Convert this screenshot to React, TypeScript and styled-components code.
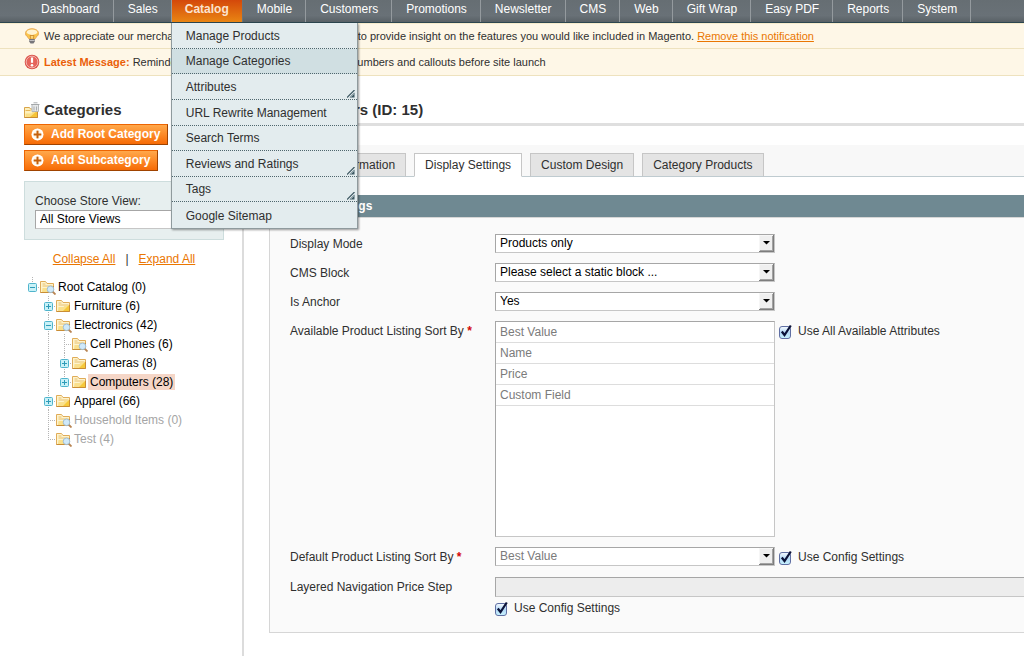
import React from "react";
import styled, { createGlobalStyle, css } from "styled-components";

const GlobalStyle = createGlobalStyle`
  *, *::before, *::after { box-sizing: border-box; }
  body {
    margin: 0;
    background: #fff;
    color: #2f2f2f;
    font: 12px/18px "Liberation Sans", Arial, Helvetica, sans-serif;
    overflow-x: hidden;
  }
  ul { list-style: none; margin: 0; padding: 0; }
  button, input, select { font: inherit; margin: 0; }
`;

const Page = styled.div`
  display: flex;
  flex-direction: column;
  min-height: 100vh;
`;

/* ---------- top navigation ---------- */

const NavBar = styled.nav`
  background: linear-gradient(#666e73 0, #697177 70%, #596166 100%);
  border-bottom: 1px solid #2c4650;
  height: 23px;
`;

const NavList = styled.ul`
  display: flex;
  padding-left: 27px;
`;

const NavItem = styled.li<{ $active?: boolean }>`
  position: relative;
  border-right: 1px solid #949a9e;
  ${(p) =>
    p.$active &&
    css`
      border-right-color: #6b7378;
    `}
`;

const NavLink = styled.a<{ $active?: boolean }>`
  display: block;
  height: 22px;
  padding: 0 13px 0 14px;
  color: #fff;
  text-decoration: none;
  white-space: nowrap;
  ${(p) =>
    p.$active &&
    css`
      padding: 0 13px;
      color: #fbe3cf;
      font-weight: bold;
      background: linear-gradient(#d4480a, #e98513);
    `}
`;

const Menu = styled.ul`
  position: absolute;
  z-index: 5;
  top: 23px;
  left: -1px;
  width: 187px;
  height: 206px;
  display: grid;
  grid-template-rows: repeat(8, 1fr);
  background: #e3ecee;
  border: 1px solid #8f9a9d;
  border-top: 0;
  box-shadow: 1px 1px 2px rgba(0, 0, 0, 0.4);
`;

const MenuItem = styled.li<{ $hover?: boolean }>`
  display: flex;
  justify-content: space-between;
  align-items: flex-end;
  padding-right: 2px;
  background: ${(p) => (p.$hover ? "#d0dfe2" : "transparent")};
  border-bottom: 1px dotted #4f666d;
  &:last-child { border-bottom: 0; }
`;

const MenuLink = styled.a`
  flex: 1;
  padding: 0 14px;
  line-height: 24px;
  color: #2f2f2f;
  text-decoration: none;
`;

/* ---------- notifications ---------- */

const Notice = styled.div<{ $first?: boolean }>`
  display: flex;
  align-items: center;
  gap: 4px;
  height: ${(p) => (p.$first ? 26 : 27)}px;
  padding-left: 24px;
  background: #fef7e7;
  border-bottom: 1px solid #eee2be;
  border-top: ${(p) => (p.$first ? "1px solid #f6ebcb" : "0")};
  font-size: 11px;
  white-space: nowrap;
  svg { flex: none; }
  strong { color: #ea5f0a; }
`;

const OrangeLink = styled.a`
  color: #ea7601;
  text-decoration: underline;
`;

/* ---------- layout ---------- */

const Columns = styled.div`
  flex: 1;
  display: grid;
  grid-template-columns: 244px minmax(0, 1fr);
`;

const Sidebar = styled.aside`
  padding: 24px 18px 24px 24px;
  border-right: 2px solid #dcdcdc;
`;

const Content = styled.main`
  padding: 24px 0 24px 25px;
`;

const Heading = styled.h3`
  display: flex;
  align-items: center;
  gap: 4px;
  margin: 0;
  height: 20px;
  font-size: 15px;
`;

const ActionButton = styled.button`
  display: flex;
  align-items: center;
  gap: 7px;
  height: 21px;
  margin: 0 0 5px;
  padding: 0 7px 1px 6px;
  border: 1px solid;
  border-color: #ed6502 #a04300 #a04300 #ed6502;
  background: linear-gradient(#ffa84b, #fd8a27 50%, #f66b06);
  color: #fff;
  font-weight: bold;
`;

const Actions = styled.div`
  display: flex;
  flex-direction: column;
  align-items: flex-start;
  padding-top: 4px;
`;

const StoreSwitcher = styled.div`
  display: flex;
  flex-direction: column;
  height: 59px;
  margin-top: 5px;
  padding: 10px;
  background: #e7efef;
  border: 1px solid #cddddd;
`;

const TreeActions = styled.div`
  display: flex;
  justify-content: center;
  gap: 10px;
  padding: 10px 0 9px;
`;

/* ---------- category tree ---------- */

const TreeRow = styled.li`
  display: flex;
  align-items: center;
  height: 19px;
  svg { flex: none; }
`;

const TreeLabel = styled.a<{ $selected?: boolean; $muted?: boolean }>`
  padding: 0 2px;
  line-height: 16px;
  text-decoration: none;
  white-space: nowrap;
  color: ${(p) => (p.$muted ? "#a5a5a5" : "#000")};
  background: ${(p) => (p.$selected ? "#f5d6c7" : "transparent")};
`;

/* ---------- tabs ---------- */

const Rule = styled.hr`
  height: 3px;
  margin: 3px 0 19px;
  border: 0;
  background: #dfdfdf;
`;

const TabBar = styled.div`
  display: flex;
  gap: 8px;
  height: 32px;
  padding: 8px 0 0 9px;
  background: #f8f8f8;
  border-bottom: 1px solid #bfcbd0;
`;

const Tab = styled.button<{ $active?: boolean }>`
  height: 24px;
  padding: 0 10px;
  white-space: nowrap;
  color: #2f2f2f;
  background: ${(p) => (p.$active ? "#fff" : "#e4e4e4")};
  border: 1px solid #c6c6c6;
  border-bottom-color: ${(p) => (p.$active ? "#fff" : "#bfcbd0")};
`;

/* ---------- form ---------- */

const SectionTitle = styled.h4`
  margin: 18px 0 0;
  padding: 0 10px;
  font-size: 12px;
  line-height: 22px;
  color: #fff;
  background: #6f8992;
`;

const FieldSet = styled.div`
  display: flex;
  flex-direction: column;
  gap: 10px;
  padding: 16px 0 14px 20px;
  background: #fafafa;
  border: 1px solid #d6d6d6;
  border-right: 0;
`;

const FieldRow = styled.div`
  display: grid;
  grid-template-columns: 205px minmax(0, 1fr);
  align-items: start;
`;

const FieldLabel = styled.label`
  line-height: 20px;
  height: 19px;
  span { color: #d40707; font-weight: bold; }
`;

const Control = styled.div`
  display: flex;
  align-items: flex-start;
  gap: 4px;
`;

const Stack = styled.div`
  display: flex;
  flex-direction: column;
  gap: 1px;
`;

const SelectWrap = styled.div<{ $wide?: boolean }>`
  display: grid;
  width: ${(p) => (p.$wide ? "280px" : "100%")};
  > * { grid-area: 1 / 1; }
  > svg { justify-self: end; align-self: center; margin-right: 1px; pointer-events: none; }
`;

const fieldBorder = css`
  border: 1px solid;
  border-color: #a6a6a6 #c6c6c6 #c6c6c6 #a6a6a6;
  border-radius: 0;
`;

const SelectBox = styled.select`
  ${fieldBorder}
  appearance: none;
  width: 100%;
  height: 19px;
  padding: 0 18px 1px 4px;
  line-height: 16px;
  color: #000;
  background: #fff;
  opacity: 1;
  &:disabled { color: #7b7b7b; }
`;

const ListBox = styled.select`
  ${fieldBorder}
  width: 280px;
  height: 216px;
  padding: 0;
  background: #fff;
  opacity: 1;
  overflow: hidden;
  option {
    min-height: 21px;
    padding: 3px 4px 1px;
    line-height: 17px;
    color: #7b7b7b;
    border-bottom: 1px solid #ddd;
  }
`;

const TextBox = styled.input`
  ${fieldBorder}
  border-right: 0;
  width: 100%;
  height: 20px;
  background: #ededed;
`;

const CheckLabel = styled.label`
  display: flex;
  align-items: center;
  gap: 5px;
  height: 20px;
  white-space: nowrap;
`;

const CheckWrap = styled.span`
  display: grid;
  width: 14px;
  height: 15px;
  > * { grid-area: 1 / 1; }
  svg { pointer-events: none; }
`;

const CheckInput = styled.input`
  appearance: none;
  align-self: end;
  width: 12px;
  height: 13px;
  border: 1px solid #5f6fa3;
  border-radius: 3px;
  background: linear-gradient(#f2f8fe, #b4d9f7 50%, #c5f0fd);
`;

/* ---------- drawings ---------- */

const BulbIcon = () => (
  <svg width="16" height="16" viewBox="0 0 16 16" aria-hidden="true">
    <path d="M8 .8C4.500.8 1.500 2.500 1.500 5.500c0 2.500 2.800 3.500 3.700 5.500h5.600c.9-2 3.700-3 3.700-5.500C14.500 2.500 11.500.8 8 .8z" fill="#fbc64e" stroke="#e6a650" />
    <ellipse cx="8" cy="4.200" rx="5.200" ry="2.700" fill="#fff3d2" />
    <path d="M7 11L6 7.500h4L9 11" fill="#fdd877" stroke="#c9862a" strokeWidth=".8" />
    <path d="M5.200 11h5.600v2.500L9.500 15.500h-3L5.200 13.500z" fill="#77767a" />
    <path d="M5.500 12.500h5" stroke="#c9c8cb" strokeWidth=".9" />
  </svg>
);

const AlertIcon = () => (
  <svg width="16" height="16" viewBox="0 0 16 16" aria-hidden="true">
    <circle cx="8" cy="8" r="7.300" fill="#d94b43" />
    <circle cx="8" cy="8" r="5.900" fill="#e5645b" stroke="#f4b9b3" />
    <path d="M8 3.500v5.300" stroke="#fff" strokeWidth="2.200" />
    <circle cx="8" cy="11.300" r="1.300" fill="#fff" />
  </svg>
);

const CategoriesIcon = () => (
  <svg width="16" height="17" viewBox="0 0 16 17" aria-hidden="true">
    <path d="M.5 15.500V5.500h5l1 1.500h7v8.500z" fill="#fdf0bd" stroke="#d9a54a" />
    <path d="M1.500 8.500h5" stroke="#e6b757" />
    <path d="M1.500 15v-3.500h6L9 9.500h4V15z" fill="#fbdf86" />
    <path d="M6 15l7-6v6z" fill="#f5c438" />
    <path d="M.5 15.500h13V9" fill="none" stroke="#c98d35" />
    <path d="M8 2.500h6.500V9.500H8z" fill="#e6e8e9" stroke="#b3b6b8" />
    <path d="M7 2.500h8.500M9.500.8h4M10 4.500v4M12.500 4.500v4" stroke="#a3a6a8" strokeWidth=".9" />
  </svg>
);

const PlusIcon = () => (
  <svg width="13" height="13" viewBox="0 0 13 13" aria-hidden="true">
    <circle cx="6.500" cy="6.500" r="6" fill="#fff6e4" />
    <path d="M6.500 2.500v8M2.500 6.500h8" stroke="#c5600b" strokeWidth="2" />
    <circle cx="6.500" cy="6.500" r="5" fill="none" stroke="#fff" strokeWidth="1.500" />
  </svg>
);

const SubmenuMark = () => (
  <svg width="8" height="9" viewBox="0 0 8 9" aria-hidden="true">
    <path d="M0 7.500L7.500 0" stroke="#3d5862" strokeWidth="1.200" />
    <path d="M2.500 7.500L7.500 2.500v5z" fill="#3d5862" />
    <path d="M4 7l3-3" stroke="#a9bcc2" strokeWidth=".7" />
  </svg>
);

const ArrowButton = () => (
  <svg width="15" height="17" viewBox="0 0 15 17" aria-hidden="true">
    <path d="M0 0h15v17H0z" fill="#efefef" />
    <path d="M14 0h1v17H0v-1h14z" fill="#7d7d7d" />
    <path d="M13 1h1v15H1v-1h12z" fill="#a3a3a3" />
    <path d="M0 .5h14M.5 0v16" stroke="#f6f6f6" />
    <path d="M4 6h7L7.500 9.500z" fill="#000" />
  </svg>
);

const FolderIcon = ({ search }: { search?: boolean }) => (
  <svg width="16" height="16" viewBox="0 0 16 16" aria-hidden="true">
    <path d="M.5 13.500v-11h5l1.500 2h6.500v9z" fill="#fdf3cd" stroke="#e0ac58" />
    <path d="M2.500 5h3M2.500 7h10" stroke="#e9c06f" />
    <path d="M2 13l.5-4h5l1.200-1.500H13V13z" fill="#fae08c" />
    <path d="M7 13l6-6v6z" fill="#f6c93b" />
    <path d="M.5 13.500h13V7" fill="none" stroke="#c98d35" />
    {search && (
      <>
        <path d="M12.500 12.500l3 3" stroke="#b88452" strokeWidth="1.800" />
        <circle cx="10.500" cy="10.300" r="3.300" fill="#cfe9fa" stroke="#a2bfd2" />
      </>
    )}
  </svg>
);

type Joint = "plus" | "minus" | "none";

const JointCell = ({ joint, below }: { joint: Joint; below: boolean }) => (
  <svg width="16" height="19" viewBox="0 0 16 19" aria-hidden="true">
    <g stroke="#b5b5b5" strokeDasharray="1 1">
      <path d="M8.500 0v10" />
      {below && <path d="M8.500 10v9" />}
      <path d="M8 10.500h8" />
    </g>
    {joint !== "none" && (
      <>
        <rect x="4.500" y="6.500" width="8" height="8" rx="1" fill="#c9f1f7" stroke="#4fb4cc" />
        <path d={joint === "plus" ? "M6 10.500h5M8.500 8v5" : "M6 10.500h5"} stroke="#2f9bb8" />
      </>
    )}
  </svg>
);

const GuideCell = ({ line }: { line: boolean }) => (
  <svg width="16" height="19" viewBox="0 0 16 19" aria-hidden="true">
    {line && <path d="M8.500 0v19" stroke="#b5b5b5" strokeDasharray="1 1" />}
  </svg>
);

/* ---------- data ---------- */

const navItems = [
  "Dashboard", "Sales", "Catalog", "Mobile", "Customers", "Promotions", "Newsletter",
  "CMS", "Web", "Gift Wrap", "Easy PDF", "Reports", "System",
];

const menuItems = [
  { label: "Manage Products" },
  { label: "Manage Categories", hover: true },
  { label: "Attributes", sub: true },
  { label: "URL Rewrite Management" },
  { label: "Search Terms" },
  { label: "Reviews and Ratings", sub: true },
  { label: "Tags", sub: true },
  { label: "Google Sitemap" },
];

interface TreeNode {
  label: string;
  guides: boolean[];
  joint: Joint;
  last?: boolean;
  search?: boolean;
  muted?: boolean;
  selected?: boolean;
}

const tree: TreeNode[] = [
  { label: "Root Catalog (0)", guides: [], joint: "minus", last: true, search: true },
  { label: "Furniture (6)", guides: [false], joint: "plus" },
  { label: "Electronics (42)", guides: [false], joint: "minus", search: true },
  { label: "Cell Phones (6)", guides: [false, true], joint: "none", search: true },
  { label: "Cameras (8)", guides: [false, true], joint: "plus" },
  { label: "Computers (28)", guides: [false, true], joint: "plus", last: true, selected: true },
  { label: "Apparel (66)", guides: [false], joint: "plus" },
  { label: "Household Items (0)", guides: [false], joint: "none", search: true, muted: true },
  { label: "Test (4)", guides: [false], joint: "none", last: true, search: true, muted: true },
];

const tabs = ["General Information", "Display Settings", "Custom Design", "Category Products"];

const selectFields = [
  { id: "display-mode", label: "Display Mode", value: "Products only" },
  { id: "cms-block", label: "CMS Block", value: "Please select a static block ..." },
  { id: "is-anchor", label: "Is Anchor", value: "Yes" },
];

/* ---------- composed controls ---------- */

interface DropDownProps {
  id: string;
  value: string;
  wide?: boolean;
  disabled?: boolean;
}

const DropDown = ({ id, value, wide, disabled }: DropDownProps) => (
  <SelectWrap $wide={wide}>
    <SelectBox id={id} disabled={disabled}>
      <option>{value}</option>
    </SelectBox>
    <ArrowButton />
  </SelectWrap>
);

const CheckBox = ({ label }: { label: string }) => (
  <CheckLabel>
    <CheckWrap>
      <CheckInput type="checkbox" defaultChecked />
      <svg width="14" height="15" viewBox="0 0 14 15" aria-hidden="true">
        <path d="M2.800 7.500L5.500 11 11.800 1.500" fill="none" stroke="#0b1238" strokeWidth="2.200" />
      </svg>
    </CheckWrap>
    {label}
  </CheckLabel>
);

export default function App() {
  return (
    <Page>
      <GlobalStyle />
      <NavBar>
        <NavList>
          {navItems.map((name) => {
            const active = name === "Catalog";
            return (
              <NavItem key={name} $active={active}>
                <NavLink href="#" $active={active}>{name}</NavLink>
                {active && (
                  <Menu>
                    {menuItems.map((item) => (
                      <MenuItem key={item.label} $hover={item.hover}>
                        <MenuLink href="#">{item.label}</MenuLink>
                        {item.sub && <SubmenuMark />}
                      </MenuItem>
                    ))}
                  </Menu>
                )}
              </NavItem>
            );
          })}
        </NavList>
      </NavBar>

      <Notice $first>
        <BulbIcon />
        <span>
          We appreciate our merchants' feedback, please take our survey to provide insight on the
          features you would like included in Magento.{" "}
          <OrangeLink href="#">Remove this notification</OrangeLink>
        </span>
      </Notice>
      <Notice>
        <AlertIcon />
        <span>
          <strong>Latest Message:</strong> Reminder: Change Magento's default phone numbers and
          callouts before site launch
        </span>
      </Notice>

      <Columns>
        <Sidebar>
          <Heading><CategoriesIcon />Categories</Heading>
          <Actions>
            <ActionButton type="button"><PlusIcon />Add Root Category</ActionButton>
            <ActionButton type="button"><PlusIcon />Add Subcategory</ActionButton>
          </Actions>
          <StoreSwitcher>
            <label htmlFor="store-view">Choose Store View:</label>
            <DropDown id="store-view" value="All Store Views" />
          </StoreSwitcher>
          <TreeActions>
            <OrangeLink href="#">Collapse All</OrangeLink>
            <span>|</span>
            <OrangeLink href="#">Expand All</OrangeLink>
          </TreeActions>
          <ul>
            {tree.map((node) => (
              <TreeRow key={node.label}>
                {node.guides.map((line, g) => {
                  const showLine = line || (node.guides.length > 1 && g === 1);
                  return <GuideCell key={g} line={showLine} />;
                })}
                <JointCell joint={node.joint} below={!node.last} />
                <FolderIcon search={node.search} />
                <TreeLabel href="#" $selected={node.selected} $muted={node.muted}>
                  {node.label}
                </TreeLabel>
              </TreeRow>
            ))}
          </ul>
        </Sidebar>

        <Content>
          <Heading><CategoriesIcon />Computers (ID: 15)</Heading>
          <Rule />
          <TabBar role="tablist">
            {tabs.map((tab) => (
              <Tab
                key={tab}
                type="button"
                role="tab"
                aria-selected={tab === "Display Settings"}
                $active={tab === "Display Settings"}
              >
                {tab}
              </Tab>
            ))}
          </TabBar>
          <SectionTitle>Display Settings</SectionTitle>
          <FieldSet>
            {selectFields.map((f) => (
              <FieldRow key={f.id}>
                <FieldLabel htmlFor={f.id}>{f.label}</FieldLabel>
                <DropDown id={f.id} value={f.value} wide />
              </FieldRow>
            ))}
            <FieldRow>
              <FieldLabel htmlFor="available-sort">
                Available Product Listing Sort By <span>*</span>
              </FieldLabel>
              <Control>
                <ListBox id="available-sort" multiple disabled>
                  <option>Best Value</option>
                  <option>Name</option>
                  <option>Price</option>
                  <option>Custom Field</option>
                </ListBox>
                <CheckBox label="Use All Available Attributes" />
              </Control>
            </FieldRow>
            <FieldRow>
              <FieldLabel htmlFor="default-sort">
                Default Product Listing Sort By <span>*</span>
              </FieldLabel>
              <Control>
                <DropDown id="default-sort" value="Best Value" wide disabled />
                <CheckBox label="Use Config Settings" />
              </Control>
            </FieldRow>
            <FieldRow>
              <FieldLabel htmlFor="price-step">Layered Navigation Price Step</FieldLabel>
              <Stack>
                <TextBox id="price-step" type="text" disabled />
                <CheckBox label="Use Config Settings" />
              </Stack>
            </FieldRow>
          </FieldSet>
        </Content>
      </Columns>
    </Page>
  );
}
